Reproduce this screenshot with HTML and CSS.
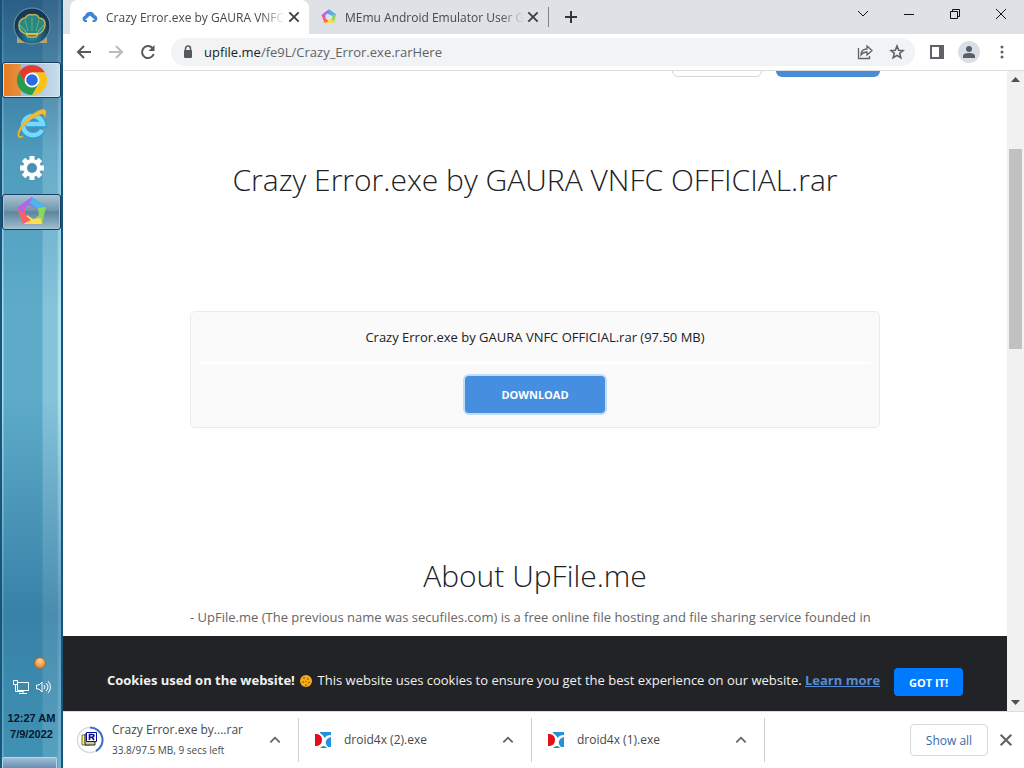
FILE: index.html
```html
<!DOCTYPE html>
<html lang="en">
<head>
    <meta charset="UTF-8">
    <meta name="viewport" content="width=device-width, initial-scale=1.0">
    <title>Crazy Error.exe by GAURA VNFC OFFICIAL.rar</title>
    <link rel="stylesheet" href="styles.css">
</head>
<body>
    <!-- shared shapes -->
    <svg class="defs" width="0" height="0" aria-hidden="true">
        <defs>
            <symbol id="memu" viewBox="0 0 32 32">
                <path fill="#8f6cf0" d="M16 1 30 11 21 13 13 9 5 9z"/>
                <path fill="#4db4ee" d="M16 1 30 11 25 21 22 13 13 7z"/>
                <path fill="#8bd957" d="M30 11 26 28 16 25 23 19 22 12z"/>
                <path fill="#ffdc50" d="M26 28H7l4-9 6 4 8-1z"/>
                <path fill="#f8616a" d="M7 28 1 12 9 12 9 19 15 24z"/>
                <path fill="#b364e8" d="M1 12 16 1 13 8 8 13 8 18z"/>
            </symbol>
            <symbol id="droid" viewBox="0 0 18 18">
                <path fill="#e60e19" d="M1 3h2q5 1 5 6t-5 6H1z"/>
                <path fill="#2591da" d="M6 1h11v3q-5 0-6 3Q9 4 6 2z"/>
                <path fill="#2591da" d="M17 6v10h-3q-3-3-2-6 1-3 5-4z"/>
                <path fill="#1d9c86" d="M6 17q4-4 7 0z"/>
            </symbol>
            <symbol id="chevron-up" viewBox="0 0 12 12">
                <path d="m2 8 4-4 4 4" fill="none" stroke="#5f6368" stroke-width="1.500"/>
            </symbol>
            <symbol id="cross" viewBox="0 0 12 12">
                <path d="m2 2 8 8m0-8-8 8" fill="none" stroke="currentColor" stroke-width="1.600"/>
            </symbol>
        </defs>
    </svg>

    <aside class="taskbar">
        <button class="start" aria-label="Start">
            <svg width="40" height="40" viewBox="0 0 40 40">
                <defs>
                    <radialGradient id="orb" cy=".75">
                        <stop offset="0" stop-color="#329aa9"/>
                        <stop offset=".6" stop-color="#1d5876"/>
                        <stop offset="1" stop-color="#143a59"/>
                    </radialGradient>
                </defs>
                <path d="m5 30 0 6h9l-5-8zm30 0 0 6h-9l5-8z" fill="#b6a66e"/>
                <circle cx="20" cy="19" r="18" fill="url(#orb)" stroke="#7599a7"/>
                <path d="M7 18c0-4 3-7 6-7 2-3 5-4 7-3 3-1 6 0 7 3 4 0 6 3 6 7 0 5-4 8-7 9l-2 3h-8l-2-3c-4-1-7-4-7-9z" fill="#2b8580" stroke="#c7ad54" stroke-width="1.6"/>
                <path d="m13 13 3 11M20 11v13m7-11-3 11" stroke="#57b58a" fill="none"/>
                <path d="M8 18l7 8m17-8-7 8" stroke="#72cf87" fill="none"/>
                <path d="M14 27h12" stroke="#e0bd4f" stroke-width="2"/>
            </svg>
        </button>
        <button class="task task-chrome" aria-label="Chrome">
            <svg width="32" height="32" viewBox="0 0 32 32">
                <path fill="#e33b2e" d="M3 8.500A15 15 0 0 1 29 8.500H16L9.500 20z"/>
                <path fill="#fbc116" d="M29 8.500A15 15 0 0 1 16 31l6.500-11.200L16 8.500z"/>
                <path fill="#269d4e" d="M16 31A15 15 0 0 1 3 8.500l6.500 11.200H22.500z"/>
                <circle cx="16" cy="16" r="7.500" fill="#fff"/>
                <circle cx="16" cy="16" r="5.800" fill="#286be2"/>
            </svg>
        </button>
        <button class="task" aria-label="Internet Explorer">
            <svg width="34" height="34" viewBox="0 0 34 34">
                <path d="M27 23A10 9.500 0 1 1 28 17H11" fill="none" stroke="#2c9bd6" stroke-width="7"/>
                <path d="M27 23A10 9.500 0 1 1 28 17H11" fill="none" stroke="#7bd9f8" stroke-width="4.500"/>
                <path d="M5 31C-2 29 8 13 18 7 25 2 32 0 31 6c0 2-1 4-2 5 1-4-1-5-5-3C13 13 5 22 4 28q0 2 5 1-2 2-4 2z" fill="#f3bd31" stroke="#d89a1b" stroke-width=".5"/>
            </svg>
        </button>
        <button class="task" aria-label="Settings">
            <svg width="26" height="26" viewBox="0 0 26 26">
                <g stroke="#fff" stroke-width="5">
                    <path d="M13 1v24M1 13h24M4.500 4.500l17 17m0-17-17 17"/>
                </g>
                <circle cx="13" cy="13" r="9" fill="#fff"/>
                <circle cx="13" cy="13" r="5" fill="#4a8fb4"/>
            </svg>
        </button>
        <button class="task task-memu" aria-label="MEmu">
            <svg width="32" height="32"><use href="#memu"/></svg>
        </button>
        <div class="tray">
            <span class="tray-dot"></span>
            <div class="tray-icons">
                <svg width="17" height="16" viewBox="0 0 17 16" fill="none" stroke="#fff">
                    <path d="M5.500 3.500h11v8h-11zM1.500 1.500h4v4h-4zM3.500 5v7.500H11M11 11.500v3M7 14.500h8"/>
                </svg>
                <svg width="16" height="16" viewBox="0 0 16 16" fill="none" stroke="#fff">
                    <path d="M1.500 6v4H4l3 3V3L4 6zM9 6q2 2 0 4m2-6q4 4 0 8m2-10q5 6 0 12"/>
                </svg>
            </div>
            <time class="clock" datetime="2022-07-09T00:27">12:27 AM<br>7/9/2022</time>
        </div>
        <button class="show-desktop" aria-label="Show desktop"></button>
    </aside>

    <div class="browser">
        <div class="tabs">
            <div class="tab active">
                <svg width="16" height="16" viewBox="0 0 16 16">
                    <path d="M5 13H3.500A3.200 3.200 0 0 1 3 6.700 5 5 0 0 1 12.500 6 3.600 3.600 0 0 1 12.500 13H10.500V11H13L8 6.500 3 11h2z" fill="#3c84d8"/>
                </svg>
                <span class="tab-title">Crazy Error.exe by GAURA VNFC</span>
                <button class="tab-close" aria-label="Close tab"><svg width="14" height="14"><use href="#cross"/></svg></button>
            </div>
            <div class="tab">
                <svg width="16" height="16"><use href="#memu"/></svg>
                <span class="tab-title">MEmu Android Emulator User Gu</span>
                <button class="tab-close" aria-label="Close tab"><svg width="14" height="14"><use href="#cross"/></svg></button>
            </div>
            <button class="new-tab" aria-label="New tab">
                <svg width="14" height="14" viewBox="0 0 14 14"><path d="M7 1v12M1 7h12" stroke="#333639" stroke-width="2"/></svg>
            </button>
            <div class="window-controls">
                <button aria-label="Search tabs"><svg width="12" height="12" viewBox="0 0 12 12"><path d="m1 3 5 5 5-5"/></svg></button>
                <button aria-label="Minimize"><svg width="12" height="12" viewBox="0 0 12 12"><path d="M1 6.500h10"/></svg></button>
                <button aria-label="Restore"><svg width="12" height="12" viewBox="0 0 12 12"><path d="M1.500 3.500h7v7h-7zM3.500 3.500v-2h7v7h-2"/></svg></button>
                <button aria-label="Close"><svg width="12" height="12" viewBox="0 0 12 12"><path d="m1 1 10 10m0-10L1 11"/></svg></button>
            </div>
        </div>

        <div class="toolbar">
            <button class="nav-btn" aria-label="Back"><svg width="16" height="16" viewBox="0 0 16 16"><path d="M15 8H2m6-6L2 8l6 6"/></svg></button>
            <button class="nav-btn disabled" aria-label="Forward"><svg width="16" height="16" viewBox="0 0 16 16"><path d="M1 8h13M8 2l6 6-6 6"/></svg></button>
            <button class="nav-btn" aria-label="Reload"><svg width="16" height="16" viewBox="0 0 16 16"><path d="M13.700 10A6 6 0 1 1 12.500 4"/><path d="M14.500 1v6h-6z" class="arrow"/></svg></button>
            <div class="address">
                <svg width="10" height="14" viewBox="0 0 10 14"><path d="M2.500 6V3.500a2.500 2.500 0 0 1 5 0V6" fill="none" stroke="#55595e" stroke-width="1.500"/><rect x="1" y="5" width="8" height="8" rx="1" fill="#55595e"/></svg>
                <span class="url"><b>upfile.me</b>/fe9L/Crazy_Error.exe.rarHere</span>
                <button aria-label="Share"><svg width="16" height="16" viewBox="0 0 16 16" fill="none" stroke="#5f6368" stroke-width="1.300"><path d="M1.500 4v10.500h11V12M4 11q0-6 6-6V2l5 4.500-5 4.500V8q-4 0-6 3z"/></svg></button>
                <button aria-label="Bookmark"><svg width="16" height="16" viewBox="0 0 16 16" fill="none" stroke="#5f6368" stroke-width="1.600"><path d="m8 2 1.700 4.200 4.300.4-3.300 2.800 1.100 4.300L8 11.400l-3.800 2.300 1.100-4.300L2 6.600l4.300-.4z"/></svg></button>
            </div>
            <button class="side-btn" aria-label="Side panel"><svg width="14" height="14" viewBox="0 0 14 14"><path d="M1 1h12v12H1z" fill="none" stroke="#5f6368" stroke-width="2"/><path d="M9 1h4v12H9z" fill="#5f6368"/></svg></button>
            <button class="avatar" aria-label="Profile"><svg width="14" height="14" viewBox="0 0 14 14" fill="#55606a"><circle cx="7" cy="4" r="3"/><path d="M1 13v-2q0-3 6-3t6 3v2z"/></svg></button>
            <button class="menu-btn" aria-label="Menu"><svg width="4" height="14" viewBox="0 0 4 14" fill="#5f6368"><circle cx="2" cy="2" r="1.500"/><circle cx="2" cy="7" r="1.500"/><circle cx="2" cy="12" r="1.500"/></svg></button>
        </div>

        <div class="viewport">
            <div class="page">
                <main class="content">
                    <div class="top-buttons">
                        <span class="top-btn"></span>
                        <span class="top-btn primary"></span>
                    </div>
                    <h1>Crazy Error.exe by GAURA VNFC OFFICIAL.rar</h1>
                    <section class="file-box">
                        <p class="file-name">Crazy Error.exe by GAURA VNFC OFFICIAL.rar (97.50 MB)</p>
                        <div class="file-action">
                            <button class="download">DOWNLOAD</button>
                        </div>
                    </section>
                    <h2>About UpFile.me</h2>
                    <p class="about">- UpFile.me (The previous name was secufiles.com) is a free online file hosting and file sharing service founded in</p>
                </main>
                <div class="cookies">
                    <p>
                        <strong>Cookies used on the website!</strong>
                        <svg class="cookie" width="12" height="12" viewBox="0 0 12 12"><circle cx="6" cy="6" r="6" fill="#f6aa16"/><g fill="#744a0f"><circle cx="4" cy="3" r=".8"/><circle cx="8" cy="4" r=".8"/><circle cx="3" cy="7" r=".8"/><circle cx="6" cy="6.500" r=".6"/><circle cx="9" cy="7.500" r=".8"/><circle cx="6" cy="10" r=".8"/></g></svg>
                        This website uses cookies to ensure you get the best experience on our website.
                        <a href="#">Learn more</a>
                    </p>
                    <button class="got-it">GOT IT!</button>
                </div>
            </div>
            <div class="scrollbar">
                <svg width="9" height="5" viewBox="0 0 9 5"><path d="M0 5 4.500 0 9 5z" fill="#505050"/></svg>
                <div class="track"><div class="thumb"></div></div>
                <svg width="9" height="5" viewBox="0 0 9 5"><path d="M0 0h9L4.500 5z" fill="#505050"/></svg>
            </div>
        </div>

        <div class="downloads">
            <div class="item">
                <svg width="28" height="28" viewBox="0 0 28 28">
                    <circle cx="14" cy="14" r="12.500" fill="#fff" stroke="#d5dae3" stroke-width="1.500"/>
                    <path d="M14 1.500A12.500 12.500 0 0 1 20 25" fill="none" stroke="#3d70c5" stroke-width="2"/>
                    <path d="M6 9h8v10H6z" fill="#f0ee86" stroke="#77772d"/>
                    <path d="M9 8h10v11H9z" fill="#c9ca9f" stroke="#222"/>
                    <path d="M10.500 6.500h10v9h-10z" fill="#fff" stroke="#0a0ba0"/>
                    <path d="M13.500 14V8.500H16q2 0 2 1.300T16 11.200h-2m2 0 2 2.800" fill="none" stroke="#0a0ba0" stroke-width="1.600"/>
                </svg>
                <div class="item-text">
                    <span>Crazy Error.exe by....rar</span>
                    <small>33.8/97.5 MB, 9 secs left</small>
                </div>
                <button aria-label="Options"><svg width="14" height="14"><use href="#chevron-up"/></svg></button>
            </div>
            <div class="item">
                <svg width="22" height="18" viewBox="0 0 22 18"><use href="#droid" width="18" height="18"/></svg>
                <div class="item-text"><span>droid4x (2).exe</span></div>
                <button aria-label="Options"><svg width="14" height="14"><use href="#chevron-up"/></svg></button>
            </div>
            <div class="item">
                <svg width="22" height="18" viewBox="0 0 22 18"><use href="#droid" width="18" height="18"/></svg>
                <div class="item-text"><span>droid4x (1).exe</span></div>
                <button aria-label="Options"><svg width="14" height="14"><use href="#chevron-up"/></svg></button>
            </div>
            <button class="show-all">Show all</button>
            <button class="shelf-close" aria-label="Close"><svg width="16" height="16"><use href="#cross"/></svg></button>
        </div>
    </div>
</body>
</html>
```
FILE: styles.css
```css
* {
    margin: 0;
    padding: 0;
    box-sizing: border-box;
}

body {
    display: flex;
    height: 100vh;
    overflow: hidden;
    font-family: "Open Sans", "Noto Sans", sans-serif;
    font-size: 13px;
    color: #202124;
}

button {
    display: flex;
    align-items: center;
    justify-content: center;
    flex-shrink: 0;
    border: none;
    background: none;
    font: inherit;
    cursor: pointer;
}

svg {
    flex-shrink: 0;
}

.defs {
    position: absolute;
}

/* Taskbar */
.taskbar {
    width: 63px;
    flex-shrink: 0;
    display: flex;
    flex-direction: column;
    gap: 8px;
    border-left: 2px solid #14567e;
    border-right: 2px solid #14567e;
    background: linear-gradient(rgba(20, 62, 105, 0.7), rgba(50, 125, 165, 0.35) 20%, rgba(90, 175, 205, 0) 40%, rgba(90, 175, 205, 0) 52%, rgba(25, 95, 140, 0.55) 80%, rgba(20, 110, 150, 0.4)),
        linear-gradient(90deg, #a8dcec 1px, #5dabc9 2px, #5dabc9 40px, #84c3da 41px, #84c3da 55px, #b5e2ef 57px);
}

.start {
    height: 54px;
}

.task {
    height: 36px;
    border-radius: 3px;
}

.task-chrome {
    border: 1px solid #173e60;
    box-shadow: inset 0 0 0 1px #d8e6ef;
    background: linear-gradient(90deg, #e77a20 0, #e5903e 30%, #9dbbd4 32%, #cadeeb 100%);
}

.task-memu {
    border: 1px solid #173e60;
    box-shadow: inset 0 0 0 1px #a9c4d4;
    background: linear-gradient(#a9c4d3, #7397ac 45%, #5d859d 50%, #a0bdcc);
}

.tray {
    margin-top: auto;
    display: flex;
    flex-direction: column;
    gap: 10px;
}

.tray-dot {
    width: 12px;
    height: 12px;
    margin-left: 32px;
    border: 1px solid #8d6c4c;
    border-radius: 50%;
    background: radial-gradient(circle at 50% 30%, #fbd2a0, #ee8f30 70%);
}

.tray-icons {
    display: flex;
    justify-content: center;
    gap: 6px;
}

.clock {
    padding-top: 5px;
    font-family: "Liberation Sans", Arial, sans-serif;
    font-size: 11px;
    font-weight: bold;
    line-height: 16px;
    text-align: center;
    color: #08192b;
}

.show-desktop {
    height: 11px;
    margin: 7px 4px 0 0;
    border: 1px solid #b9d9ea;
    border-bottom: none;
    border-radius: 2px 2px 0 0;
    background: linear-gradient(#a3bcd2, #6590b3);
}

/* Browser frame */
.browser {
    flex: 1;
    min-width: 0;
    display: flex;
    flex-direction: column;
    background: #fff;
}

.tabs {
    display: flex;
    align-items: center;
    height: 34px;
    flex-shrink: 0;
    padding-left: 7px;
    background: #dee1e6;
}

.tab {
    display: flex;
    align-items: center;
    gap: 8px;
    width: 239px;
    height: 34px;
    padding: 0 8px 0 12px;
    font-size: 12px;
    color: #45494d;
}

.tab.active {
    border-radius: 8px 8px 0 0;
    background: #fff;
}

.tab-title {
    flex: 1;
    overflow: hidden;
    margin-right: -6px;
    white-space: nowrap;
    mask-image: linear-gradient(90deg, #000 calc(100% - 24px), transparent);
}

.tab-close {
    width: 14px;
    height: 14px;
    color: #3c4043;
}

.new-tab {
    height: 20px;
    padding: 0 15px;
    border-left: 1px solid #808488;
}

.window-controls {
    display: flex;
    align-self: flex-start;
    height: 28px;
    margin-left: auto;
}

.window-controls button {
    width: 46px;
}

.window-controls path {
    fill: none;
    stroke: #111;
}

.toolbar {
    display: flex;
    align-items: center;
    height: 37px;
    flex-shrink: 0;
    padding: 0 20px 0 13px;
    border-bottom: 1px solid #dadce0;
}

.nav-btn {
    width: 16px;
    margin-right: 16px;
}

.nav-btn path {
    fill: none;
    stroke: #55595e;
    stroke-width: 2;
}

.nav-btn .arrow {
    fill: #55595e;
    stroke: none;
}

.nav-btn.disabled path {
    stroke: #b9bcc0;
}

.address {
    flex: 1;
    display: flex;
    align-items: center;
    gap: 16px;
    height: 28px;
    margin-right: 15px;
    padding: 0 10px 0 12px;
    border-radius: 14px;
    background: #f1f3f4;
}

.url {
    flex: 1;
    margin-left: -5px;
    color: #5f6368;
}

.nav-btn + .address {
    margin-left: -1px;
}

.url b {
    font-weight: normal;
    color: #202124;
}

.avatar {
    width: 22px;
    height: 22px;
    margin: 0 20px 0 14px;
    border-radius: 50%;
    background: #d9dfe5;
}

/* Web page */
.viewport {
    flex: 1;
    min-height: 0;
    display: flex;
}

.page {
    flex: 1;
    display: flex;
    flex-direction: column;
}

.content {
    flex: 1;
    min-height: 0;
    width: 100%;
    max-width: 690px;
    margin: 0 auto;
    overflow: hidden;
    text-align: center;
}

.top-buttons {
    display: flex;
    align-items: flex-end;
    justify-content: flex-end;
    gap: 14px;
    height: 6px;
}

.top-btn {
    width: 90px;
    height: 36px;
    border: 1px solid #d5d5d5;
    border-radius: 6px;
}

.top-btn.primary {
    width: 104px;
    border: none;
    background: #4a8bd6;
}

h1,
h2 {
    font-size: 30px;
    font-weight: 300;
    line-height: 40px;
}

h1 {
    margin: 83px 0 111px;
}

.file-box {
    margin-bottom: 128px;
    border: 1px solid #ebebeb;
    border-radius: 5px;
    background: #fafafa;
}

.file-name {
    margin: 0 8px;
    padding: 16px;
    border-bottom: 2px solid #fff;
    line-height: 18px;
    font-weight: 500;
}

.file-action {
    display: flex;
    justify-content: center;
    padding: 12px 12px 14px;
}

.download {
    width: 140px;
    height: 37px;
    border-radius: 4px;
    background: #468ee0;
    box-shadow: 0 0 0 2px #c2dcf8;
    color: #fff;
    font-size: 11px;
    font-weight: bold;
}

.about {
    margin-top: 10px;
    line-height: 22px;
    text-align: left;
    white-space: nowrap;
    color: #666;
}

.cookies {
    display: flex;
    align-items: center;
    justify-content: center;
    gap: 14px;
    padding: 32px 0 15px;
    background: #212326;
    color: #f1f1f1;
}

.cookies p {
    line-height: 24px;
    padding-bottom: 4px;
    white-space: nowrap;
}

.cookie {
    margin: 0 2px;
    vertical-align: -2px;
}

.cookies a {
    color: #568cd3;
    font-weight: bold;
}

.got-it {
    width: 69px;
    height: 28px;
    border-radius: 4px;
    background: #007bff;
    color: #fff;
    font-size: 11px;
    font-weight: bold;
}

.scrollbar {
    width: 17px;
    display: flex;
    flex-direction: column;
    align-items: center;
    gap: 6px;
    padding: 6px 0;
    background: #f1f1f1;
}

.track {
    flex: 1;
    width: 13px;
    padding-top: 61px;
}

.thumb {
    height: 200px;
    background: #c1c1c1;
}

/* Download shelf */
.downloads {
    display: flex;
    align-items: center;
    height: 57px;
    flex-shrink: 0;
    padding-right: 10px;
    border-top: 1px solid #dadce0;
    color: #45494d;
}

.item {
    display: flex;
    align-items: center;
    gap: 8px;
    width: 233px;
    height: 44px;
    padding: 0 16px 0 15px;
    border-right: 1px solid #cfd1d4;
}

.item:first-child {
    width: 236px;
    padding-left: 13px;
}

.item-text {
    flex: 1;
    display: flex;
    flex-direction: column;
    white-space: nowrap;
    font-size: 12px;
    line-height: 20px;
}

.item-text small {
    font-size: 10px;
}

.show-all {
    width: 78px;
    height: 32px;
    margin-left: auto;
    border: 1px solid #d5d8dc;
    border-radius: 4px;
    color: #3868ae;
    font-size: 12px;
    font-weight: 500;
}

.shelf-close {
    margin-left: 10px;
    color: #5f6368;
}
```
